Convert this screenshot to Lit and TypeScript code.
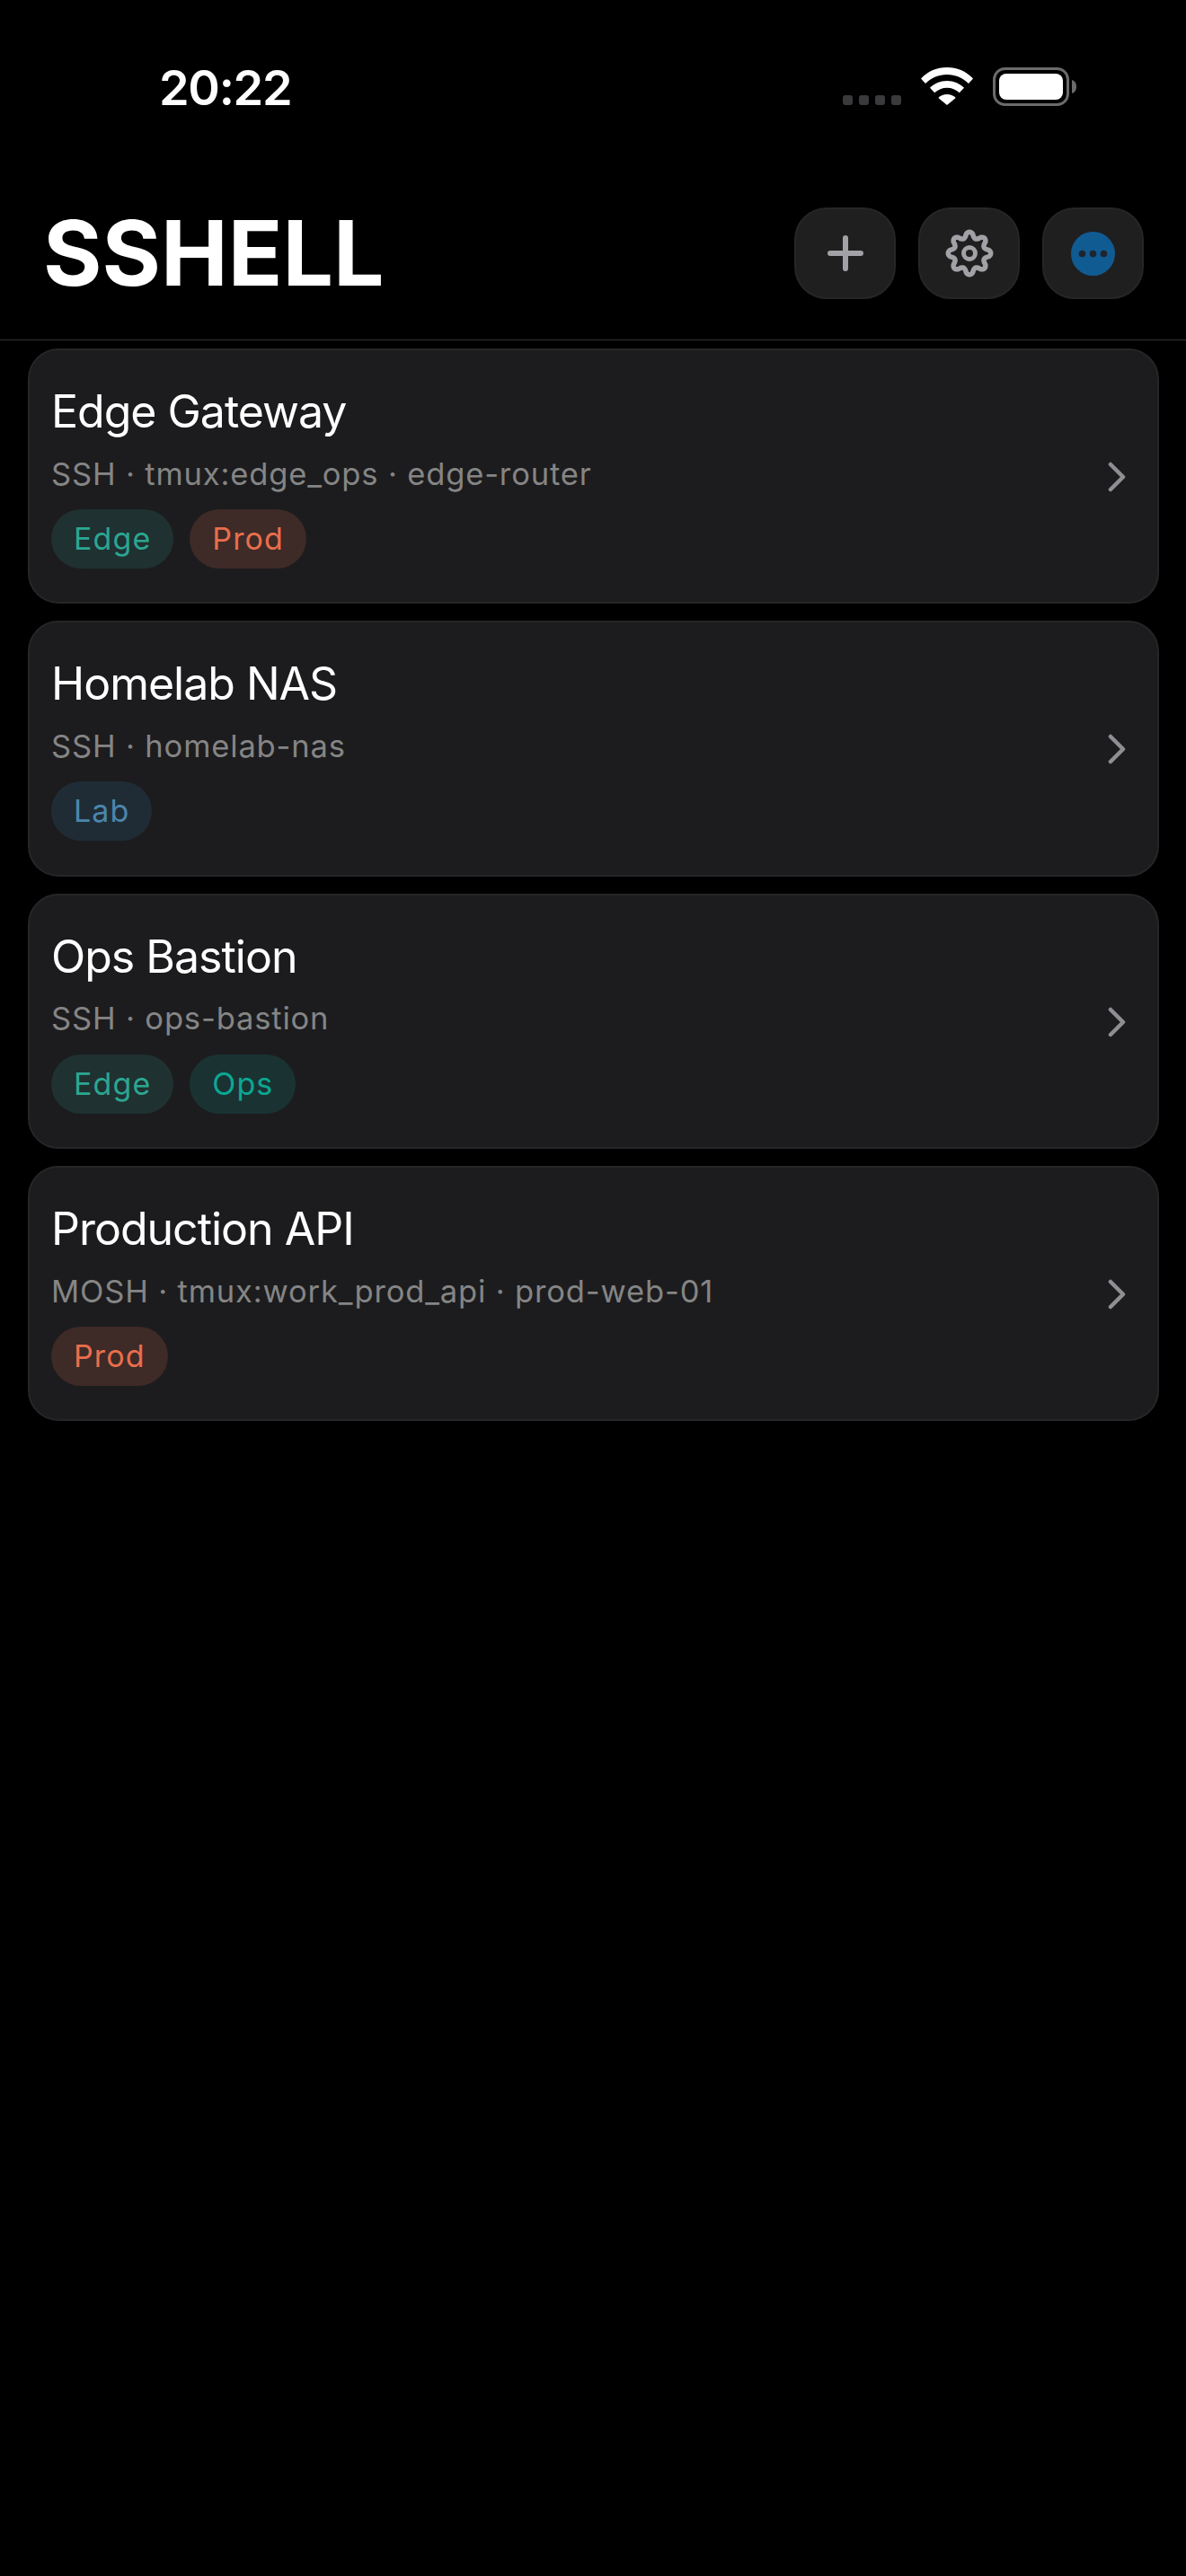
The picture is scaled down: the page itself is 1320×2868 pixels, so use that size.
import { LitElement, html, css, svg } from "lit";
import { customElement } from "lit/decorators.js";

type Tag = { label: string; kind: string };
type Host = { name: string; meta: string; tags: Tag[] };

const EDGE = { label: "Edge", kind: "edge" };
const PROD = { label: "Prod", kind: "prod" };
const LAB = { label: "Lab", kind: "lab" };
const OPS = { label: "Ops", kind: "ops" };

const HOSTS: Host[] = [
  { name: "Edge Gateway", meta: "SSH · tmux:edge_ops · edge-router", tags: [EDGE, PROD] },
  { name: "Homelab NAS", meta: "SSH · homelab-nas", tags: [LAB] },
  { name: "Ops Bastion", meta: "SSH · ops-bastion", tags: [EDGE, OPS] },
  { name: "Production API", meta: "MOSH · tmux:work_prod_api · prod-web-01", tags: [PROD] },
];

function gearPath(): string {
  const pts: string[] = [];
  const n = 192;
  for (let i = 0; i < n; i++) {
    const t = (i / n) * Math.PI * 2;
    const c = Math.cos(8 * t);
    const r = 20.6 + 3.1 * Math.sign(c) * Math.pow(Math.abs(c), 0.7);
    const x = 27 + r * Math.sin(t);
    const y = 27 - r * Math.cos(t);
    pts.push(`${x.toFixed(2)} ${y.toFixed(2)}`);
  }
  return `M${pts.join("L")}Z`;
}

@customElement("app-root")
export class AppRoot extends LitElement {
  static styles = css`
    :host {
      display: block;
      width: 1320px;
      height: 2868px;
      background: #000;
      color: #fff;
      font-family: Inter, "Noto Sans", sans-serif;
      overflow: hidden;
    }
    .status {
      height: 190px;
      box-sizing: border-box;
      padding: 0 122px 0 177px;
      display: flex;
      justify-content: space-between;
      align-items: flex-start;
    }
    .time {
      margin-top: 65px;
      font-size: 54px;
      line-height: 65px;
      font-weight: 600;
      letter-spacing: -1.3px;
    }
    .indicators {
      display: flex;
      align-items: flex-start;
      margin-top: 75px;
    }
    .signal {
      margin-top: 31px;
      margin-right: 22px;
    }
    .wifi {
      margin-right: 22px;
    }
    .header {
      height: 189px;
      box-sizing: border-box;
      padding: 0 47px 0 48px;
      border-bottom: 1px solid #333335;
      display: flex;
      justify-content: space-between;
      align-items: flex-start;
    }
    .title {
      margin: 42px 0 0;
      font-size: 100px;
      line-height: 100px;
      font-weight: 700;
      letter-spacing: 0;
    }
    .actions {
      display: flex;
      gap: 25px;
      margin-top: 41px;
    }
    .action {
      width: 113px;
      height: 102px;
      box-sizing: border-box;
      border-radius: 36px;
      background: #1f1f20;
      border: 2px solid #262627;
      display: flex;
      align-items: center;
      justify-content: center;
    }
    .list {
      padding: 9px 30px 0 31px;
      display: flex;
      flex-direction: column;
      gap: 19px;
    }
    .card {
      height: 284.3px;
      box-sizing: border-box;
      border-radius: 34px;
      background: #1c1c1e;
      border: 2px solid #262628;
      padding: 2px 34px 0 24px;
      display: flex;
      align-items: center;
      justify-content: space-between;
    }
    .name {
      font-size: 50px;
      line-height: 58px;
      font-weight: 400;
      letter-spacing: -1px;
      color: #fff;
    }
    .meta {
      margin-top: 18.5px;
      font-size: 34.5px;
      line-height: 44px;
      letter-spacing: 0.85px;
      color: #858585;
    }
    .tags {
      display: flex;
      gap: 18px;
      margin-top: 17.5px;
    }
    .tag {
      height: 66px;
      box-sizing: border-box;
      padding: 0 25px;
      border-radius: 33px;
      font-size: 34px;
      line-height: 66px;
      font-weight: 400;
      letter-spacing: 1.1px;
    }
    .edge { background: #1f3130; color: #2ba692; }
    .prod { background: #3e2a27; color: #e96e4c; }
    .lab { background: #202c35; color: #4a86ae; }
    .ops { background: #1a3332; color: #0aa894; }
    svg { display: block; }
  `;

  private signal() {
    return svg`<svg class="signal" width="65" height="11" viewBox="0 0 65 11">
      ${[0, 18, 36, 54].map((x) => svg`<rect x=${x} y="0" width="11" height="11" rx="3" fill="#3a3a3c"/>`)}
    </svg>`;
  }

  private wifi() {
    return svg`<svg class="wifi" width="58" height="42" viewBox="0 0 58 42">
      <path fill="#fff" d="M29 0C18 0 8 4 0 12.500l5 5.500C11.500 11.500 20 8 29 8s17.500 3.500 24 10l5-5.500C50 4 40 0 29 0z"/>
      <path fill="#fff" d="M29 15c-7.500 0-14 2.800-19 7.800l5.200 5.500C19 24.600 23.800 22.700 29 22.700s10 1.900 13.800 5.600l5.200-5.500C43 17.800 36.500 15 29 15z"/>
      <path fill="#fff" d="M29 30c-3.800 0-7.200 1.400-9.700 3.900L29 42l9.700-8.100C36.200 31.400 32.800 30 29 30z"/>
    </svg>`;
  }

  private battery() {
    return svg`<svg width="93" height="43" viewBox="0 0 93 43">
      <rect x="1.500" y="1.500" width="82" height="40" rx="12" fill="none" stroke="#6b6b6d" stroke-width="3"/>
      <rect x="7" y="7" width="71" height="29" rx="8" fill="#fff"/>
      <path d="M88 14c3 .8 5 3.500 5 7.500s-2 6.700-5 7.500z" fill="#6b6b6d"/>
    </svg>`;
  }

  private plus() {
    return svg`<svg width="40" height="40" viewBox="0 0 40 40">
      <path d="M20 3v34M3 20h34" stroke="#a1a1a6" stroke-width="6" stroke-linecap="round" fill="none"/>
    </svg>`;
  }

  private gear() {
    return svg`<svg width="54" height="54" viewBox="0 0 54 54" fill="none" stroke="#a1a1a6" stroke-width="5.500" stroke-linejoin="round">
      <path d=${gearPath()}/>
      <circle cx="27" cy="27" r="6.500" stroke-width="5"/>
    </svg>`;
  }

  private more() {
    return svg`<svg width="49" height="49" viewBox="0 0 49 49">
      <circle cx="24.500" cy="24.500" r="24.500" fill="#115b93"/>
      <circle cx="12.500" cy="24.500" r="3.800" fill="#1c2530"/>
      <circle cx="24.500" cy="24.500" r="3.800" fill="#1c2530"/>
      <circle cx="36.500" cy="24.500" r="3.800" fill="#1c2530"/>
    </svg>`;
  }

  private chevron() {
    return svg`<svg width="22" height="34" viewBox="0 0 22 34">
      <path d="M4 3l14 14L4 31" fill="none" stroke="#8e8e93" stroke-width="4.500" stroke-linecap="round" stroke-linejoin="round"/>
    </svg>`;
  }

  render() {
    return html`
      <div class="status">
        <div class="time">20:22</div>
        <div class="indicators">${this.signal()}${this.wifi()}${this.battery()}</div>
      </div>
      <header class="header">
        <h1 class="title">SSHELL</h1>
        <div class="actions">
          <div class="action">${this.plus()}</div>
          <div class="action">${this.gear()}</div>
          <div class="action">${this.more()}</div>
        </div>
      </header>
      <main class="list">
        ${HOSTS.map(
          (h) => html`
            <div class="card">
              <div>
                <div class="name">${h.name}</div>
                <div class="meta">${h.meta}</div>
                <div class="tags">
                  ${h.tags.map((t) => html`<span class="tag ${t.kind}">${t.label}</span>`)}
                </div>
              </div>
              ${this.chevron()}
            </div>
          `
        )}
      </main>
    `;
  }
}
